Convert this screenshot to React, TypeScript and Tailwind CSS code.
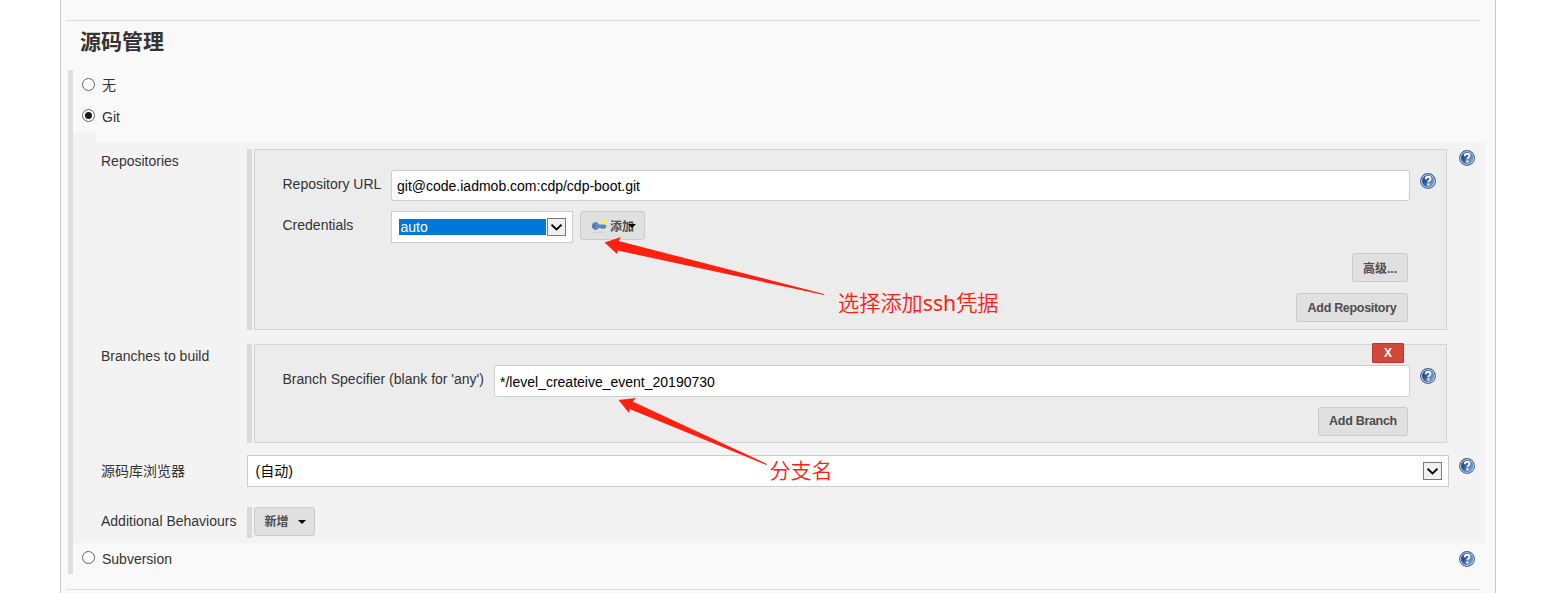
import type { ReactNode } from 'react';

function Help({ className = '' }: { className?: string }) {
  return (
    <svg className={`block h-4 w-4 shrink-0 ${className}`} viewBox="0 0 16 16" aria-label="help">
      <defs>
        <linearGradient id="helpFill" x1="0" y1="0.2" x2="1" y2="0.8">
          <stop offset="0.2" stopColor="#1f4a89" />
          <stop offset="1" stopColor="#86abd9" />
        </linearGradient>
      </defs>
      <circle cx="8" cy="8" r="7.4" fill="#fff" stroke="#37619d" strokeWidth="1.1" />
      <circle cx="8" cy="8" r="6" fill="url(#helpFill)" stroke="#37619d" strokeWidth="0.4" />
      <path d="M5.6 6.2C5.7 4.4 6.8 3.7 8.2 3.7c1.4 0 2.3.8 2.3 2 0 1.7-2.1 1.7-2.1 3.5" fill="none" stroke="#fff" strokeWidth="1.9" />
      <rect x="7.3" y="10.4" width="2.1" height="2.1" fill="#fff" />
    </svg>
  );
}

function Radio({ label, checked = false, labelClass = 'mt-1.5' }: { label: string; checked?: boolean; labelClass?: string }) {
  return (
    <div className="flex h-[31px] items-start pl-[9px]">
      <span className="mt-2 flex h-[13px] w-[13px] items-center justify-center rounded-full border border-[#606060] bg-white">
        {checked && <span className="h-[7px] w-[7px] rounded-full bg-[#1c1c1c]" />}
      </span>
      <span className={`ml-[7px] leading-5 ${labelClass}`}>{label}</span>
    </div>
  );
}

function Button({ children, className = '' }: { children: ReactNode; className?: string }) {
  return (
    <button className={`flex h-[29px] shrink-0 items-center justify-center rounded-[3px] border border-[#cacaca] bg-[#e0e0e0] text-[12px] font-bold text-[#4d4d4d] ${className}`}>
      {children}
    </button>
  );
}

function SelectArrow() {
  return (
    <span className="flex h-[18px] w-[19px] shrink-0 items-center justify-center border border-[#7a7a7a] bg-[#f0f0f0]">
      <svg width="11" height="7" viewBox="0 0 11 7">
        <path d="M0.5 0.7L5.5 5.5L10.5 0.7" fill="none" stroke="#000" strokeWidth="1.9" />
      </svg>
    </span>
  );
}

function Row({ label, labelClass, className, children }: { label: string; labelClass: string; className: string; children: ReactNode }) {
  return (
    <div className={`flex items-start ${className}`}>
      <div className={`w-[174px] shrink-0 whitespace-nowrap pl-7 leading-5 ${labelClass}`}>{label}</div>
      {children}
    </div>
  );
}

function KeyIcon() {
  return (
    <svg width="16" height="16" viewBox="0 0 16 16" className="mt-px shrink-0">
      <ellipse cx="8" cy="14.3" rx="6" ry="0.7" fill="#cfcfcf" />
      <circle cx="12.6" cy="4" r="2.6" fill="#f8ec3e" />
      <circle cx="12.6" cy="4" r="1" fill="#fffbb8" />
      <path d="M4.700 4.500a3.500 3.500 0 1 0 3.200 4.900h2.100v.9h1.300v-.9h.9v.9h1.300v-.9h1l.6-1.200-.9-1.200H7.900A3.500 3.500 0 0 0 4.700 4.500Z" fill="#5d8fce" stroke="#42699e" strokeWidth=".7" />
      <circle cx="3.500" cy="8" r="1" fill="#315b91" />
    </svg>
  );
}

const input = 'flex items-center rounded-[3px] border border-[#ccc] bg-white pl-[5px] text-black';

export default function App() {
  return (
    <div className="relative h-[593px] w-[1567px] overflow-hidden bg-white pl-[60px] font-['Liberation_Sans','Noto_Sans_CJK_SC',sans-serif] text-[14px] text-[#333]">
      <main className="h-full w-[1436px] border-x border-[#c8c8c8] bg-[#f9f9f9] pt-5">
        <hr className="ml-[5px] w-[1414px] border-[#ddd]" />
        <h2 className="ml-[19px] h-[49px] pt-[5px] text-[21px] font-bold leading-[32px]">源码管理</h2>

        <section className="ml-[7px] flex h-[504px] w-[1417px]">
          <div className="w-[5px] shrink-0 bg-[#dfdfdf]" />
          <div className="flex-1">
            <Radio label="无" labelClass="mt-[5px]" />
            <Radio label="Git" checked />
            <div className="h-2.5 w-[23px] bg-[#f3f3f3]" />
            <div className="h-[401px] bg-[#f3f3f3] pt-[7px]">
              <Row label="Repositories" labelClass="pt-0.5" className="h-[195px]">
                <div className="h-[181px] w-[5px] bg-[#dadada]" />
                <div className="ml-0.5 h-[181px] w-[1193px] border border-[#d3d3d3] bg-[#ececec] pl-[27px] pt-5">
                  <div className="flex h-[41px] items-start">
                    <label className="w-[109px] pl-[0.5px] pt-1 leading-5">Repository URL</label>
                    <div className={`${input} h-[31px] w-[1019px] pt-px`}>git@code.iadmob.com:cdp/cdp-boot.git</div>
                    <Help className="ml-2.5 mt-[3px]" />
                  </div>
                  <div className="flex h-[42px] items-start">
                    <label className="w-[109px] pl-[0.5px] pt-1 leading-5">Credentials</label>
                    <div className="flex h-8 w-[182px] items-center border border-[#ccc] bg-white pl-[7px]">
                      <span className="mr-px h-4 w-[147px] bg-[#0078d7] pl-[1.5px] leading-4 text-white">auto</span>
                      <SelectArrow />
                    </div>
                    <Button className="relative ml-[7px] w-[65px]">
                      <KeyIcon />
                      <span className="ml-[3px] pt-0.5">添加</span>
                      <span className="absolute right-[8px] top-[12px] border-x-[4px] border-t-[4px] border-x-transparent border-t-black" />
                    </Button>
                  </div>
                  <div className="flex w-[1126px] flex-col items-end gap-[11px]">
                    <Button className="w-14 pt-0.5">高级...</Button>
                    <Button className="w-28 pt-0.5 !text-[12.5px] tracking-[-0.3px]">Add Repository</Button>
                  </div>
                </div>
                <Help className="ml-3 mt-px" />
              </Row>

              <Row label="Branches to build" labelClass="pt-0.5" className="h-[111px]">
                <div className="h-[99px] w-[5px] bg-[#dadada]" />
                <div className="relative ml-0.5 h-[99px] w-[1193px] border border-[#d3d3d3] bg-[#ececec] pl-[27px] pt-5">
                  <button className="absolute -top-0.5 right-[42px] h-5 w-8 rounded-[1px] border border-[#bd3527] bg-[#d2483a] text-[12px] font-bold leading-[18px] text-white">X</button>
                  <div className="flex h-[42px] items-start">
                    <label className="w-[212px] pl-[0.5px] pt-1 leading-5">Branch Specifier (blank for 'any')</label>
                    <div className={`${input} h-8 w-[916px] pt-0.5`}>*/level_createive_event_20190730</div>
                    <Help className="ml-2.5 mt-[3px]" />
                  </div>
                  <div className="flex w-[1126px] justify-end">
                    <Button className="w-[90px] pb-px !text-[12.5px] tracking-[-0.3px]">Add Branch</Button>
                  </div>
                </div>
              </Row>

              <Row label="源码库浏览器" labelClass="pt-1.5" className="h-[52px]">
                <div className="flex h-8 w-[1202px] items-center justify-between border border-[#ccc] bg-white pl-[7.5px] pr-1.5 text-black">
                  <span>(自动)</span>
                  <SelectArrow />
                </div>
                <Help className="ml-2.5 mt-[3px]" />
              </Row>

              <Row label="Additional Behaviours" labelClass="pt-1" className="h-9">
                <div className="h-[31px] w-[5px] bg-[#dadada]" />
                <Button className="ml-0.5 w-[61px] pl-px">
                  新增
                  <span className="ml-[9px] border-x-[4px] border-t-[4px] border-x-transparent border-t-black" />
                </Button>
              </Row>
            </div>
            <div className="flex justify-between pr-2.5">
              <Radio label="Subversion" />
              <Help className="mt-2" />
            </div>
          </div>
        </section>
        <hr className="ml-[5px] mt-[15px] w-[1414px] border-[#ddd]" />
      </main>

      <svg className="pointer-events-none absolute left-0 top-0" width="1567" height="593" aria-hidden="true">
        <path d="M604.5 242.5L621 237L618.5 241L824 294L824 295L617.5 250.500L617 254Z" fill="#ff2010" />
        <path d="M618.5 400L636 398L632.5 401.500L767 464L766.5 465L629.5 409L629 413Z" fill="#ff2010" />
      </svg>
      <span className="absolute left-[838px] top-[286px] whitespace-nowrap font-['Noto_Sans_CJK_SC',sans-serif] text-[21.2px] font-[350] leading-8 text-[#ff2010]">
        选择添加<span className="font-['Noto_Sans',sans-serif] font-normal">ssh</span>凭据
      </span>
      <span className="absolute left-[769.5px] top-[453px] whitespace-nowrap font-['Noto_Sans_CJK_SC',sans-serif] text-[21px] font-[350] leading-8 text-[#ff2010]">分支名</span>
    </div>
  );
}
